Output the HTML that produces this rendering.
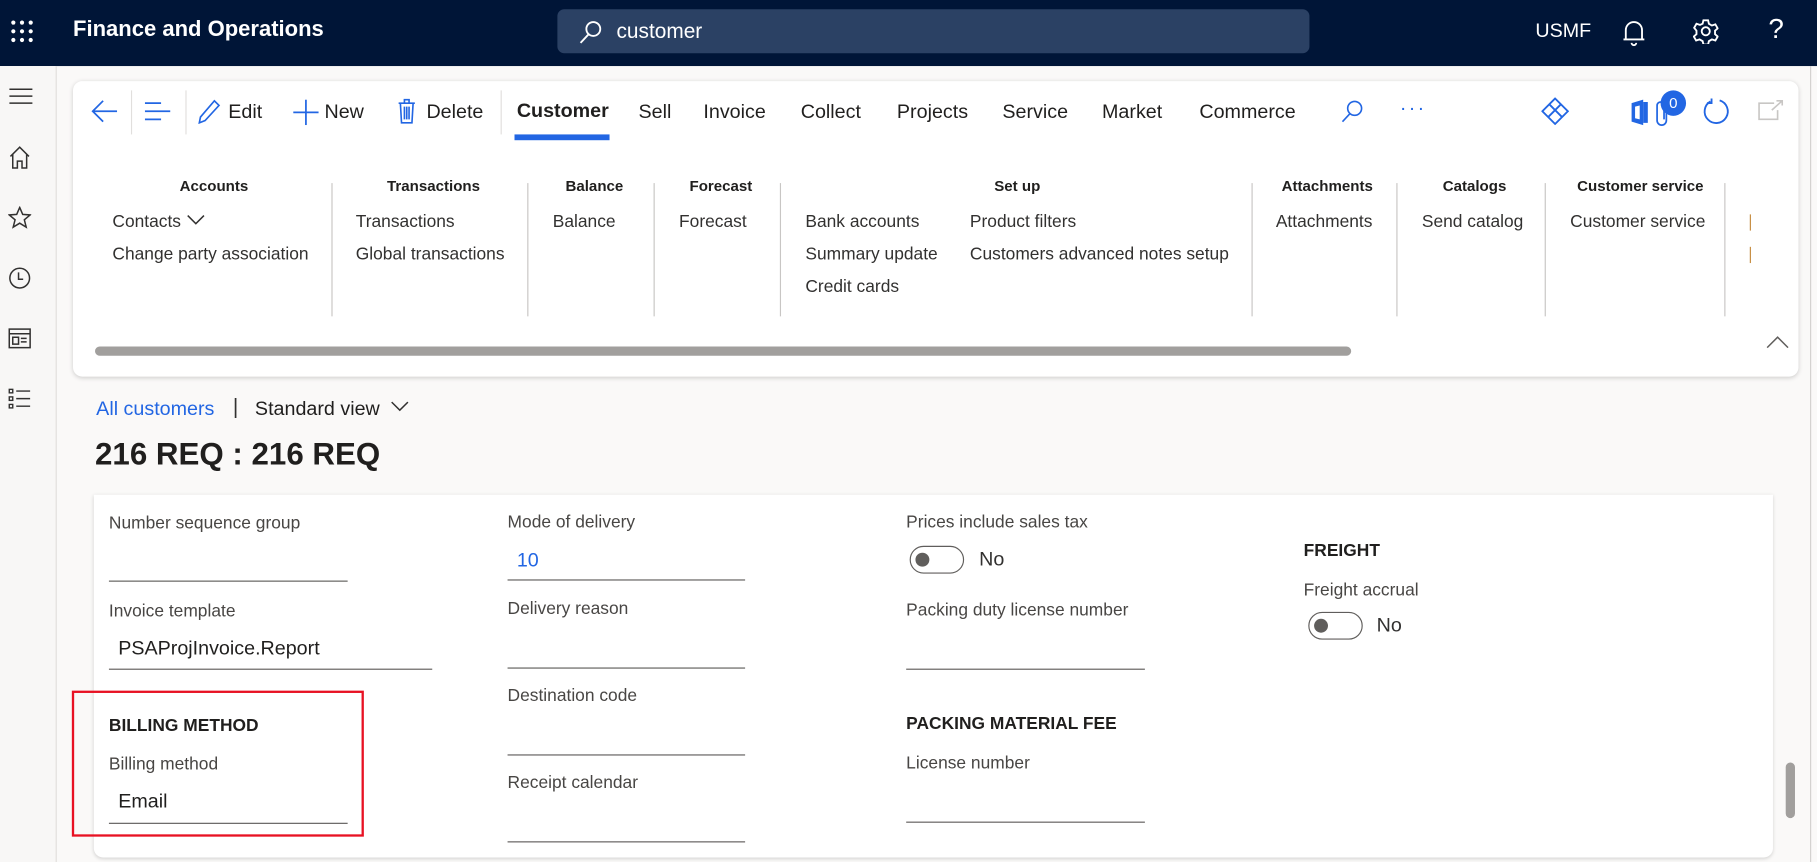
<!DOCTYPE html>
<html><head><meta charset="utf-8">
<style>
html,body{margin:0;padding:0;width:1817px;height:862px;overflow:hidden;background:#faf9f8;font-family:"Liberation Sans",sans-serif;color:#323130}
#w{position:absolute;left:0;top:0;width:1568px;height:744px;transform:scale(1.15880);transform-origin:0 0}
.a{position:absolute;white-space:nowrap}
.top{position:absolute;left:0;top:0;width:1568px;height:57px;background:#001537}
.rail{position:absolute;left:0;top:57px;width:48px;height:687px;background:#f8f7f6;border-right:1px solid #e1dfdd}
.card{position:absolute;left:63px;top:70px;width:1489px;height:255px;background:#fff;border-radius:8px;box-shadow:0 1px 4px rgba(0,0,0,.18)}
.tb{font-size:17px;color:#201f1e}
.gh{font-size:13px;font-weight:bold;color:#201f1e}
.gi{font-size:15px;color:#323130}
.vs{position:absolute;top:158px;width:1px;height:115px;background:#c8c6c4}
.form{position:absolute;left:81px;top:427px;width:1449px;height:313px;background:#fff;border-radius:0 0 8px 8px;box-shadow:0 1px 3px rgba(0,0,0,.15)}
.lb{font-size:15px;color:#484644}
.val{font-size:17px;color:#201f1e}
.ln{position:absolute;height:1px;background:#605e5c}
.sec{font-size:15px;font-weight:bold;color:#201f1e}
.tg{position:absolute;width:45px;height:22px;border:1px solid #605e5c;border-radius:12px;background:#fff}
.tg:after{content:"";position:absolute;left:4px;top:5px;width:12px;height:12px;border-radius:50%;background:#605e5c}
</style></head><body><div id="w">
<div class="top"></div>
<svg class="a" style="left:9px;top:17px" width="20" height="20" viewBox="0 0 20 20" fill="#fff"><circle cx="2.5" cy="2.5" r="1.8"/><circle cx="10" cy="2.5" r="1.8"/><circle cx="17.5" cy="2.5" r="1.8"/><circle cx="2.5" cy="10" r="1.8"/><circle cx="10" cy="10" r="1.8"/><circle cx="17.5" cy="10" r="1.8"/><circle cx="2.5" cy="17.5" r="1.8"/><circle cx="10" cy="17.5" r="1.8"/><circle cx="17.5" cy="17.5" r="1.8"/></svg>
<div class="a" style="left:63px;top:15px;font-size:19px;font-weight:bold;color:#fff">Finance and Operations</div>
<div class="a" style="left:481px;top:8px;width:649px;height:38px;background:#2b4164;border-radius:6px"></div>
<svg class="a" style="left:499px;top:17px" width="22" height="22" viewBox="0 0 22 22" fill="none" stroke="#fff" stroke-width="1.6"><circle cx="13" cy="8" r="6"/><path d="M9 12.5L2 20"/></svg>
<div class="a" style="left:532px;top:17px;font-size:18px;color:#fff">customer</div>
<div class="a" style="left:1325px;top:17px;font-size:17px;color:#fff">USMF</div>
<svg class="a" style="left:1400px;top:16px" width="20" height="24" viewBox="0 0 20 24" fill="none" stroke="#fff" stroke-width="1.6"><path d="M3 18V10a7 7 0 0114 0v8H3zM1 18h18M8 21a2 2 0 004 0"/></svg>
<svg class="a" style="left:1461px;top:16px" width="22" height="22" viewBox="0 0 22 22" fill="none" stroke="#fff" stroke-width="1.6"><circle cx="11" cy="11" r="3.5"/><path d="M9 1.5h4l.7 3 2.6 1.5 3-1 2 3.5-2.3 2v3l2.3 2-2 3.5-3-1-2.6 1.5-.7 3H9l-.7-3-2.6-1.5-3 1-2-3.5 2.3-2v-3L1 8l2-3.5 3 1L8.3 4.5z"/></svg>
<div class="a" style="left:1526px;top:12px;font-size:24px;color:#fff">?</div>

<div class="rail"></div>
<svg class="a" style="left:8px;top:76px" width="20" height="14" viewBox="0 0 20 14" stroke="#323130" stroke-width="1.3"><path d="M0 1h20M0 7h20M0 13h20"/></svg>
<svg class="a" style="left:8px;top:126px" width="18" height="20" viewBox="0 0 18 20" fill="none" stroke="#323130" stroke-width="1.3"><path d="M1 9L9 1l8 8M3 7v12h4v-6h4v6h4V7"/></svg>
<svg class="a" style="left:7px;top:178px" width="20" height="20" viewBox="0 0 20 20" fill="none" stroke="#323130" stroke-width="1.3"><path d="M10 1l2.6 6 6.4.5-5 4.2 1.6 6.3L10 14.6 4.4 18 6 11.7 1 7.5 7.4 7z"/></svg>
<svg class="a" style="left:7px;top:230px" width="20" height="20" viewBox="0 0 20 20" fill="none" stroke="#323130" stroke-width="1.3"><circle cx="10" cy="10" r="8.5"/><path d="M9 5v6h4"/></svg>
<svg class="a" style="left:7px;top:283px" width="20" height="18" viewBox="0 0 20 18" fill="none" stroke="#323130" stroke-width="1.3"><rect x="1" y="1" width="18" height="16"/><path d="M1 5h18M4 8h5v6H4zM11 9h5M11 12h5"/></svg>
<svg class="a" style="left:7px;top:335px" width="20" height="18" viewBox="0 0 20 18" fill="none" stroke="#323130" stroke-width="1.2"><rect x="1" y="1" width="3" height="3"/><rect x="1" y="7.5" width="3" height="3"/><rect x="1" y="14" width="3" height="3"/><path d="M7 2.5h12M7 9h12M7 15.5h12"/></svg>

<div class="card"></div>
<svg class="a" style="left:78px;top:86px" width="24" height="20" viewBox="0 0 24 20" fill="none" stroke="#2266e3" stroke-width="1.5"><path d="M11 1L2 10l9 9M2 10h21"/></svg>
<div class="a" style="left:113px;top:78px;width:1px;height:38px;background:#e1dfdd"></div>
<svg class="a" style="left:125px;top:88px" width="22" height="16" viewBox="0 0 22 16" stroke="#2266e3" stroke-width="1.5"><path d="M0 1h14M0 8h22M0 15h14"/></svg>
<div class="a" style="left:160px;top:78px;width:1px;height:38px;background:#e1dfdd"></div>
<svg class="a" style="left:171px;top:85px" width="20" height="22" viewBox="0 0 20 22" fill="none" stroke="#2266e3" stroke-width="1.4"><path d="M14 2l4 4L6 19l-5 2 1-5z"/></svg>
<div class="a tb" style="left:197px;top:87px">Edit</div>
<svg class="a" style="left:253px;top:86px" width="22" height="22" viewBox="0 0 22 22" stroke="#2266e3" stroke-width="1.5"><path d="M11 0v22M0 11h22"/></svg>
<div class="a tb" style="left:280px;top:87px">New</div>
<svg class="a" style="left:343px;top:85px" width="16" height="22" viewBox="0 0 16 22" fill="none" stroke="#2266e3" stroke-width="1.4"><path d="M1 4h14M6 4V1h4v3M2.5 4l1 17h9l1-17M6 7v11M8 7v11M10 7v11"/></svg>
<div class="a tb" style="left:368px;top:87px">Delete</div>
<div class="a" style="left:432px;top:78px;width:1px;height:38px;background:#e1dfdd"></div>
<div class="a tb" style="left:446px;top:86px;font-weight:bold">Customer</div>
<div class="a" style="left:444px;top:116px;width:82px;height:5px;background:#2266e3"></div>
<div class="a tb" style="left:551px;top:87px">Sell</div>
<div class="a tb" style="left:607px;top:87px">Invoice</div>
<div class="a tb" style="left:691px;top:87px">Collect</div>
<div class="a tb" style="left:774px;top:87px">Projects</div>
<div class="a tb" style="left:865px;top:87px">Service</div>
<div class="a tb" style="left:951px;top:87px">Market</div>
<div class="a tb" style="left:1035px;top:87px">Commerce</div>
<svg class="a" style="left:1157px;top:86px" width="20" height="20" viewBox="0 0 20 20" fill="none" stroke="#2266e3" stroke-width="1.4"><circle cx="12" cy="7.5" r="6"/><path d="M8 12L1.5 19"/></svg>
<div class="a" style="left:1208px;top:84px;font-size:17px;color:#2266e3;letter-spacing:2px">···</div>
<svg class="a" style="left:1330px;top:84px" width="24" height="24" viewBox="0 0 24 24" fill="none" stroke="#2266e3" stroke-width="1.6"><path d="M12 1l11 11-11 11L1 12zM7 6l11 11M17 6L6 17"/></svg>
<svg class="a" style="left:1405px;top:85px" width="18" height="24" viewBox="0 0 18 24" fill="#2266e3"><path d="M3 4l10-3v22L3 20z"/><path d="M13 3h4v18h-4z"/><path d="M6 7v10l4 1V6z" fill="#fff"/></svg>
<svg class="a" style="left:1428px;top:86px" width="14" height="24" viewBox="0 0 14 24" fill="none" stroke="#2266e3" stroke-width="1.5"><path d="M10 6v12a4 4 0 01-8 0V5a3 3 0 016 0v12"/></svg>
<div class="a" style="left:1433px;top:78px;width:22px;height:22px;border-radius:50%;background:#2266e3;color:#fff;font-size:13px;text-align:center;line-height:22px">0</div>
<svg class="a" style="left:1469px;top:84px" width="24" height="24" viewBox="0 0 24 24" fill="none" stroke="#2266e3" stroke-width="1.6"><path d="M15 2.6A10 10 0 1 1 7 3.5"/><path d="M8 1v4H4"/></svg>
<svg class="a" style="left:1517px;top:86px" width="22" height="18" viewBox="0 0 22 18" fill="none" stroke="#c8c6c4" stroke-width="1.4"><path d="M14 3H1v14h16v-8M12 9l9-8M16 1h5v4"/></svg>

<div class="a gh" style="left:155px;top:153px">Accounts</div>
<div class="a gi" style="left:97px;top:183px">Contacts</div>
<svg class="a" style="left:161px;top:185px" width="16" height="10" viewBox="0 0 16 10" fill="none" stroke="#323130" stroke-width="1.3"><path d="M1 1l7 7 7-7"/></svg>
<div class="a gi" style="left:97px;top:211px">Change party association</div>
<div class="vs" style="left:286px"></div>
<div class="a gh" style="left:334px;top:153px">Transactions</div>
<div class="a gi" style="left:307px;top:183px">Transactions</div>
<div class="a gi" style="left:307px;top:211px">Global transactions</div>
<div class="vs" style="left:455px"></div>
<div class="a gh" style="left:488px;top:153px">Balance</div>
<div class="a gi" style="left:477px;top:183px">Balance</div>
<div class="vs" style="left:564px"></div>
<div class="a gh" style="left:595px;top:153px">Forecast</div>
<div class="a gi" style="left:586px;top:183px">Forecast</div>
<div class="vs" style="left:673px"></div>
<div class="a gh" style="left:858px;top:153px">Set up</div>
<div class="a gi" style="left:695px;top:183px">Bank accounts</div>
<div class="a gi" style="left:695px;top:211px">Summary update</div>
<div class="a gi" style="left:695px;top:239px">Credit cards</div>
<div class="a gi" style="left:837px;top:183px">Product filters</div>
<div class="a gi" style="left:837px;top:211px">Customers advanced notes setup</div>
<div class="vs" style="left:1080px"></div>
<div class="a gh" style="left:1106px;top:153px">Attachments</div>
<div class="a gi" style="left:1101px;top:183px">Attachments</div>
<div class="vs" style="left:1205px"></div>
<div class="a gh" style="left:1245px;top:153px">Catalogs</div>
<div class="a gi" style="left:1227px;top:183px">Send catalog</div>
<div class="vs" style="left:1333px"></div>
<div class="a gh" style="left:1361px;top:153px">Customer service</div>
<div class="a gi" style="left:1355px;top:183px">Customer service</div>
<div class="vs" style="left:1488px"></div>
<div class="a" style="left:1510px;top:185px;width:1px;height:14px;background:#c58a3d"></div>
<div class="a" style="left:1510px;top:213px;width:1px;height:14px;background:#c58a3d"></div>
<div class="a" style="left:82px;top:299px;width:1084px;height:8px;border-radius:4px;background:#a19f9d"></div>
<svg class="a" style="left:1524px;top:289px" width="20" height="12" viewBox="0 0 20 12" fill="none" stroke="#605e5c" stroke-width="1.3"><path d="M1 11l9-9 9 9"/></svg>

<div class="a" style="left:83px;top:343px;font-size:17px;color:#2266e3">All customers</div>
<div class="a" style="left:201px;top:341px;font-size:18px;color:#323130">|</div>
<div class="a" style="left:220px;top:343px;font-size:17px;color:#201f1e">Standard view</div>
<svg class="a" style="left:337px;top:346px" width="16" height="10" viewBox="0 0 16 10" fill="none" stroke="#323130" stroke-width="1.3"><path d="M1 1l7 7 7-7"/></svg>
<div class="a" style="left:82px;top:377px;font-size:27px;font-weight:bold;color:#201f1e">216 REQ : 216 REQ</div>

<div class="form"></div>
<div class="a lb" style="left:94px;top:443px">Number sequence group</div>
<div class="ln" style="left:94px;top:501px;width:206px"></div>
<div class="a lb" style="left:94px;top:519px">Invoice template</div>
<div class="a val" style="left:102px;top:550px">PSAProjInvoice.Report</div>
<div class="ln" style="left:94px;top:577px;width:279px"></div>
<div class="a" style="left:62px;top:596px;width:248px;height:122px;border:2px solid #e81123"></div>
<div class="a sec" style="left:94px;top:618px">BILLING METHOD</div>
<div class="a lb" style="left:94px;top:651px">Billing method</div>
<div class="a val" style="left:102px;top:682px">Email</div>
<div class="ln" style="left:94px;top:710px;width:206px"></div>

<div class="a lb" style="left:438px;top:442px">Mode of delivery</div>
<div class="a val" style="left:446px;top:474px;color:#2266e3">10</div>
<div class="ln" style="left:438px;top:500px;width:205px"></div>
<div class="a lb" style="left:438px;top:517px">Delivery reason</div>
<div class="ln" style="left:438px;top:576px;width:205px"></div>
<div class="a lb" style="left:438px;top:592px">Destination code</div>
<div class="ln" style="left:438px;top:651px;width:205px"></div>
<div class="a lb" style="left:438px;top:667px">Receipt calendar</div>
<div class="ln" style="left:438px;top:726px;width:205px"></div>

<div class="a lb" style="left:782px;top:442px">Prices include sales tax</div>
<div class="tg" style="left:785px;top:471px"></div>
<div class="a val" style="left:845px;top:473px;color:#323130">No</div>
<div class="a lb" style="left:782px;top:518px">Packing duty license number</div>
<div class="ln" style="left:782px;top:577px;width:206px"></div>
<div class="a sec" style="left:782px;top:616px">PACKING MATERIAL FEE</div>
<div class="a lb" style="left:782px;top:650px">License number</div>
<div class="ln" style="left:782px;top:709px;width:206px"></div>

<div class="a sec" style="left:1125px;top:467px">FREIGHT</div>
<div class="a lb" style="left:1125px;top:501px">Freight accrual</div>
<div class="tg" style="left:1129px;top:528px"></div>
<div class="a val" style="left:1188px;top:530px;color:#323130">No</div>
<div class="a" style="left:1541px;top:658px;width:8px;height:48px;border-radius:4px;background:#a19f9d"></div>
<div class="a" style="left:1562px;top:57px;width:1px;height:687px;background:#d2d0ce"></div>
</div></body></html>
